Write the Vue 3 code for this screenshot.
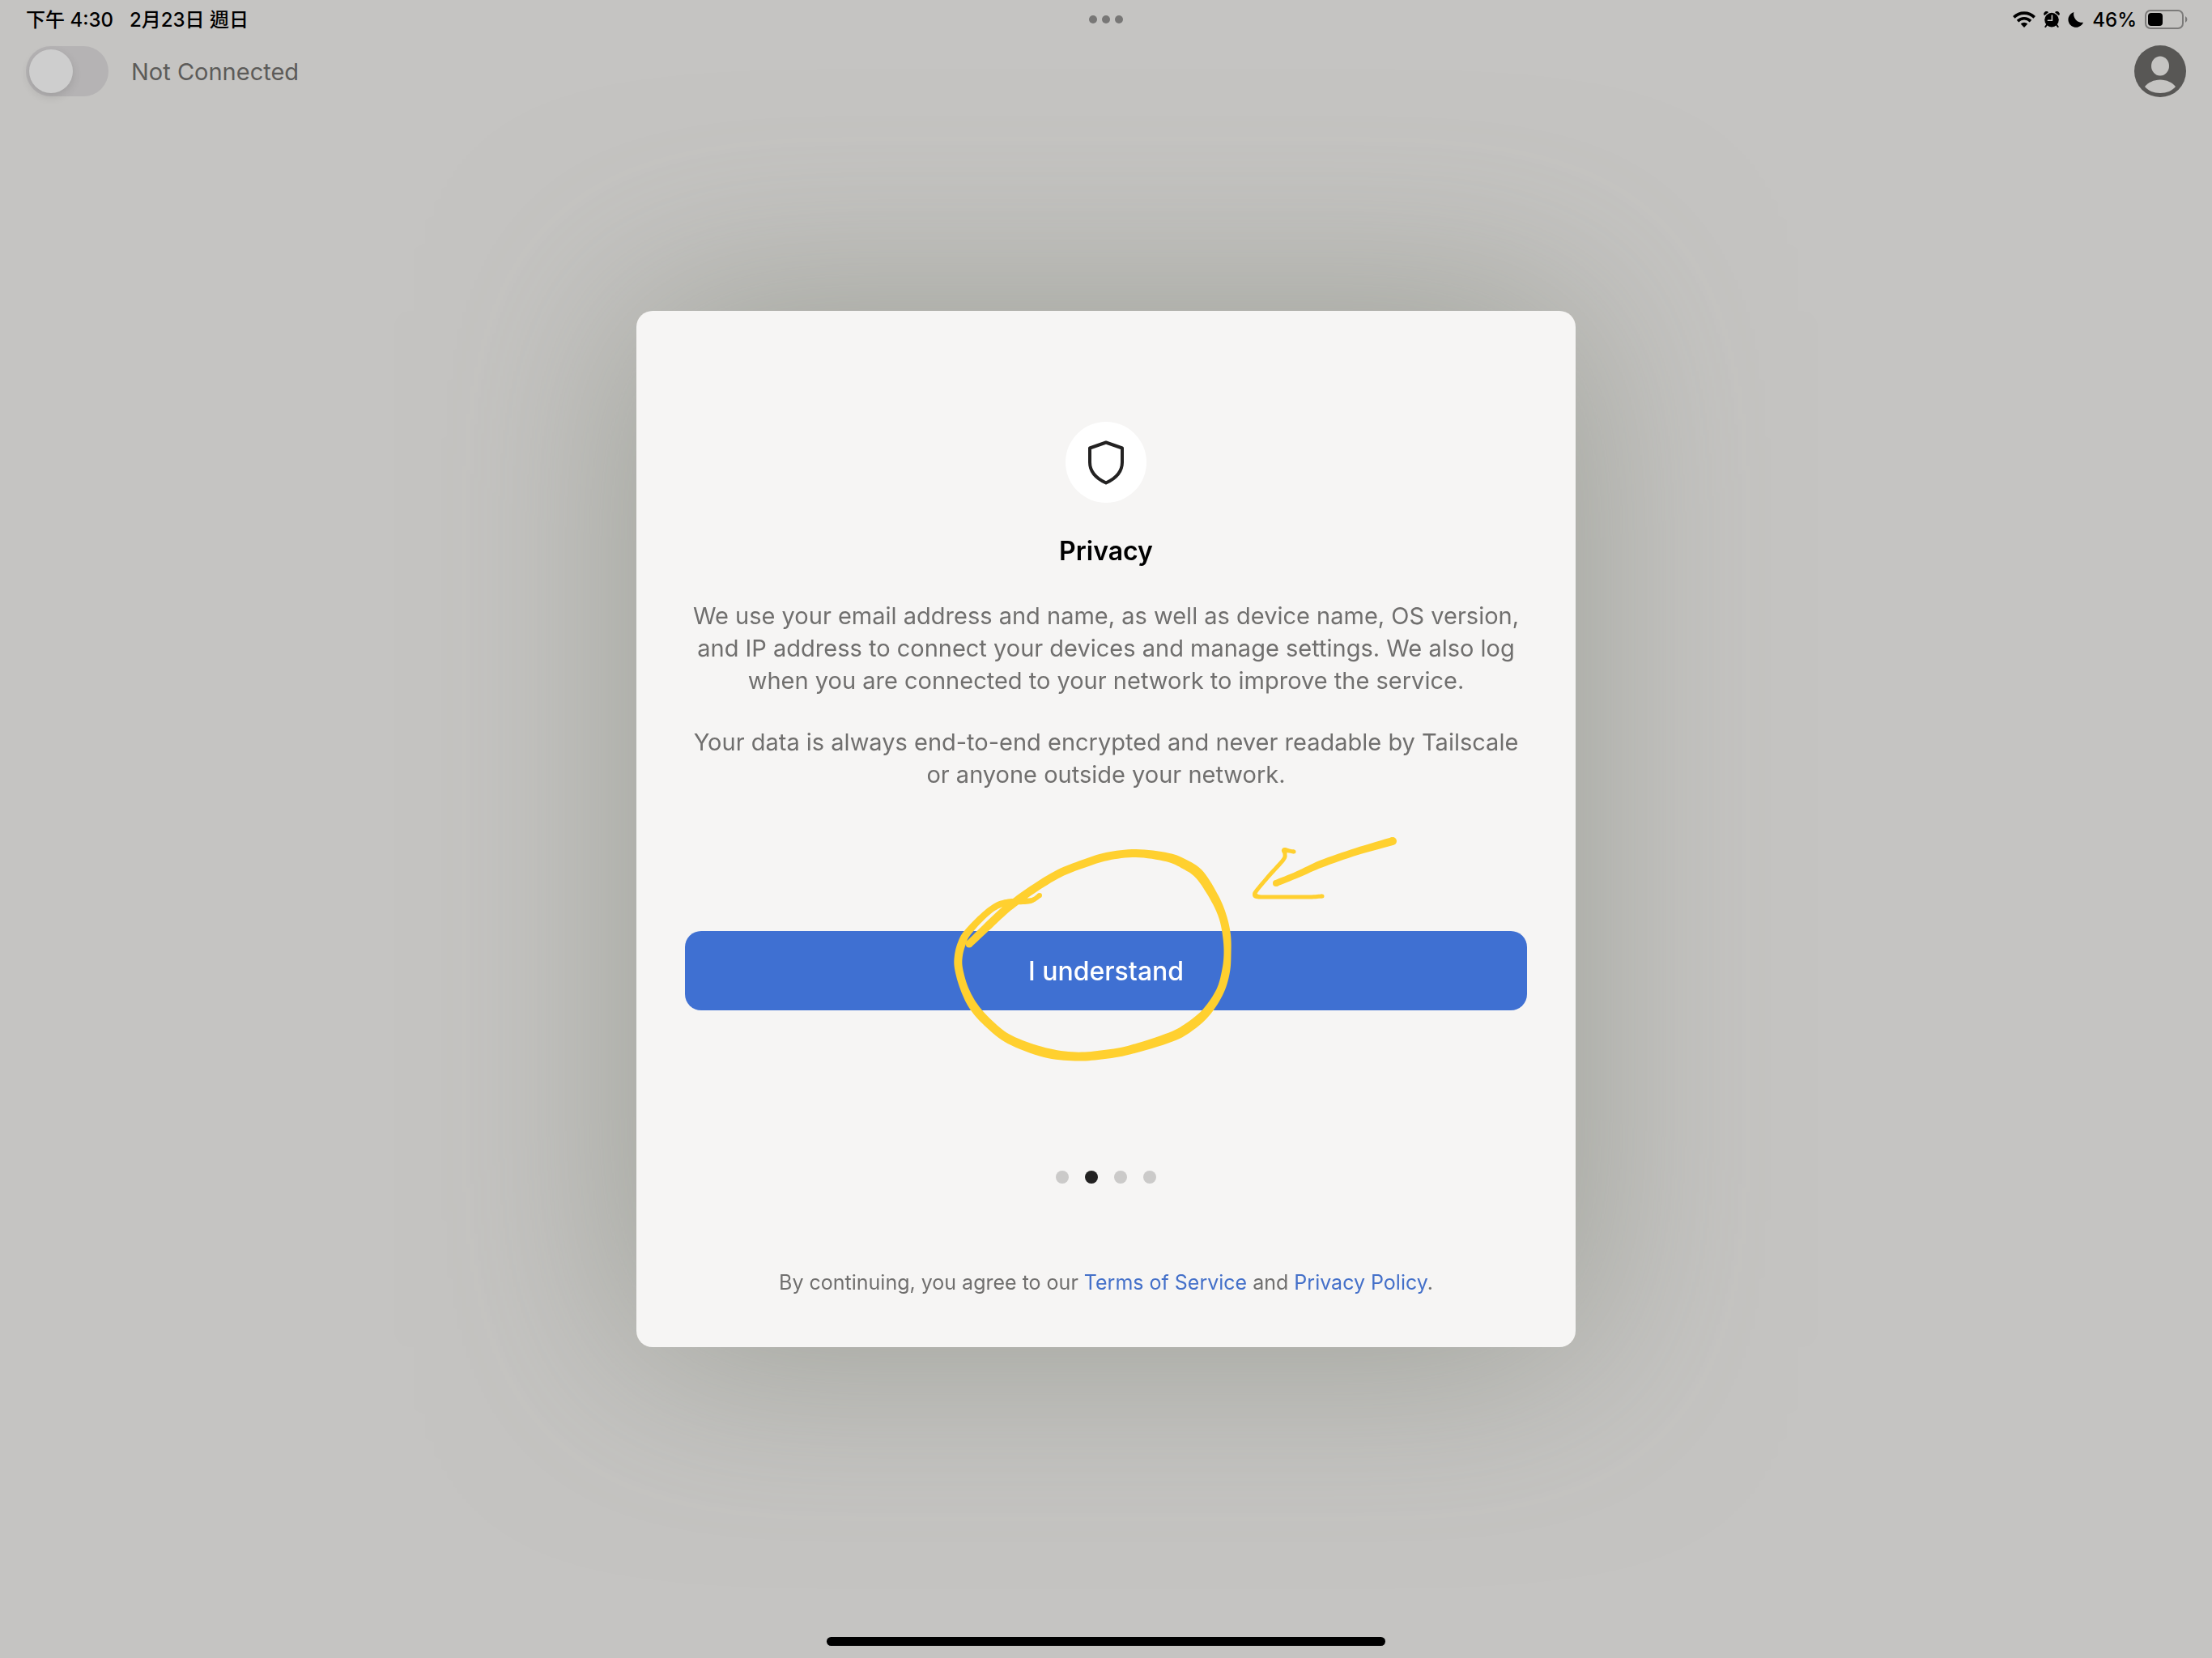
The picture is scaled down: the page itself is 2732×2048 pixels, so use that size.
<script setup>
import { ref } from 'vue'

const connected = ref(false)
const step = ref(1)
const steps = ['Welcome', 'Privacy', 'Devices', 'Sign in']

/* Pen strokes: [x, y, width] samples joined by a smooth ribbon. */
const strokes = [
  [
    [47, 146, 9], [71, 123, 10], [95, 101, 10], [125, 79, 10], [158, 59, 10], [188, 47, 10], [217, 38, 10],
    [253, 34, 10], [292, 39, 11], [314, 48, 12], [332, 61, 12], [350, 89, 11], [360, 112, 10], [365, 135, 10],
    [366, 158, 9], [364, 180, 10], [357, 204, 10], [341, 229, 11], [321, 247, 12], [296, 261, 12],
    [245, 277, 11], [210, 283, 11], [178, 285, 11], [140, 280, 12], [97, 264, 11], [72, 245, 11],
    [53, 224, 11], [41, 201, 10], [34, 176, 10], [34, 160, 10], [38, 145, 10], [45, 132, 9],
    [66, 110, 8], [83, 98, 8], [100, 94, 8], [120, 93, 7], [127, 91, 6], [134, 86, 6]
  ],
  [[426, 71, 8], [453, 60, 8], [482, 47, 9], [525, 32, 9], [570, 19, 10]],
  [
    [448, 32, 5], [442, 31, 5], [436, 30, 6], [437, 35, 5], [435, 42, 5], [418, 61, 5], [402, 80, 5], [400, 85, 6],
    [402, 87, 6], [410, 88, 5], [447, 88, 5], [468, 88, 5], [483, 87, 5]
  ]
]

function ribbon(points) {
  const samples = []
  for (let i = 0; i < points.length - 1; i++) {
    const a = points[Math.max(i - 1, 0)]
    const b = points[i]
    const c = points[i + 1]
    const d = points[Math.min(i + 2, points.length - 1)]
    for (let s = 0; s < 8; s++) {
      const t = s / 8
      samples.push([0, 1, 2].map((k) =>
        0.5 * (2 * b[k] + (c[k] - a[k]) * t + (2 * a[k] - 5 * b[k] + 4 * c[k] - d[k]) * t * t +
          (3 * b[k] - a[k] - 3 * c[k] + d[k]) * t * t * t)))
    }
  }
  samples.push(points[points.length - 1])
  const left = []
  const right = []
  samples.forEach(([x, y, w], i) => {
    const p = samples[Math.max(i - 1, 0)]
    const n = samples[Math.min(i + 1, samples.length - 1)]
    const len = Math.hypot(n[0] - p[0], n[1] - p[1]) || 1
    const ox = (-(n[1] - p[1]) / len) * w / 2
    const oy = ((n[0] - p[0]) / len) * w / 2
    left.push(`${(x + ox).toFixed(2)} ${(y + oy).toFixed(2)}`)
    right.unshift(`${(x - ox).toFixed(2)} ${(y - oy).toFixed(2)}`)
  })
  return `M${left.concat(right).join('L')}Z`
}
</script>

<template>
  <div class="screen">
    <div class="status">
      <div class="status-side status-left">
        <span>下午 4:30</span>
        <span>2月23日 週日</span>
      </div>
      <div class="multitask"><i></i><i></i><i></i></div>
      <div class="status-side status-right">
        <svg width="28" height="20" viewBox="0 0 28 20" aria-label="Wi-Fi">
          <g fill="none" stroke="#000" stroke-width="3.6">
            <path d="M1.3 7.4a18 18 0 0 1 25.4 0" />
            <path d="M6 12.1a11.4 11.4 0 0 1 16 0" />
          </g>
          <path d="M14 20l-4.3-4.4a6.2 6.2 0 0 1 8.6 0z" />
        </svg>
        <svg width="20" height="20" viewBox="0 0 20 20" aria-label="Alarm">
          <circle cx="10" cy="10.6" r="8.8" />
          <path d="M1 5.2A3.2 3.2 0 0 1 6 1.2zM19 5.2A3.2 3.2 0 0 0 14 1.2z" />
          <path d="M4.5 16l-2.2 3M15.5 16l2.2 3" stroke="#000" stroke-width="2" stroke-linecap="round" />
          <path d="M10.4 5v6.2H5.4" fill="none" stroke="#c5c4c2" stroke-width="1.6" stroke-linecap="round" />
        </svg>
        <svg width="20" height="20" viewBox="0 0 20 20" aria-label="Focus">
          <path d="M7.4 1a10.4 10.4 0 0 0 11.600 12.7A9.600 9.600 0 1 1 7.4 1z" />
        </svg>
        <span>46%</span>
        <svg class="battery" width="51" height="24" viewBox="0 0 51 24" aria-label="Battery">
          <rect x="1" y="1" width="46" height="22" rx="6" fill="none" stroke="#7b7a79" stroke-width="2" />
          <rect x="4" y="4" width="18" height="16" rx="4" />
          <path d="M50 8a4.5 4.5 0 0 1 0 8z" fill="#7b7a79" />
        </svg>
      </div>
    </div>

    <header class="bar">
      <label class="connection">
        <input v-model="connected" type="checkbox" role="switch" class="switch" />
        <span>Not Connected</span>
      </label>
      <button class="avatar" type="button" aria-label="Account">
        <svg viewBox="0 0 64 64" width="64" height="64">
          <circle cx="32" cy="32" r="32" fill="#585755" />
          <ellipse cx="32" cy="25.5" rx="11" ry="12" fill="#c5c4c2" />
          <path d="M13 51c4-5 11-8.500 19-8.500s15 3.500 19 8.500c-4 5-11 8-19 8s-15-3-19-8z" fill="#c5c4c2" />
        </svg>
      </button>
    </header>

    <div class="overlay">
      <section class="card" role="dialog" aria-labelledby="title">
        <div class="badge">
          <svg width="100" height="100" viewBox="0 0 100 100" fill="none" stroke="#232222" stroke-width="4">
            <path d="M50 25.500L70 32.500V50C70 62 62 70 50 75.500C38 70 30 62 30 50V32.500Z" stroke-linejoin="round" />
          </svg>
        </div>
        <h1 id="title">Privacy</h1>
        <p>
          We use your email address and name, as well as device name, OS version,<br />
          and IP address to connect your devices and manage settings. We also log<br />
          when you are connected to your network to improve the service.
        </p>
        <p>
          Your data is always end-to-end encrypted and never readable by Tailscale<br />
          or anyone outside your network.
        </p>
        <div class="action">
          <button class="primary" type="button" @click="step = Math.min(step + 1, 3)">I understand</button>
          <svg class="ink" width="620" height="310" viewBox="0 0 620 310" aria-hidden="true">
            <g v-for="(s, i) in strokes" :key="i" fill="#ffd02f">
              <path :d="ribbon(s)" />
              <circle :cx="s[0][0]" :cy="s[0][1]" :r="s[0][2] / 2" />
              <circle :cx="s[s.length - 1][0]" :cy="s[s.length - 1][1]" :r="s[s.length - 1][2] / 2" />
            </g>
          </svg>
        </div>
        <div class="dots">
          <i v-for="(s, i) in steps" :key="s" :class="{ on: i === step }"></i>
        </div>
        <footer>
          By continuing, you agree to our <a href="#terms">Terms of Service</a> and
          <a href="#privacy">Privacy Policy</a>.
        </footer>
      </section>
    </div>

    <div class="home"></div>
  </div>
</template>

<style>
body {
  background: #c5c4c2;
}
</style>

<style scoped>
.screen {
  box-sizing: border-box;
  min-height: 100vh;
  display: flex;
  flex-direction: column;
  background: #c5c4c2;
  color: #000;
  font-family: Inter, "Noto Sans CJK TC", sans-serif;
}
.status {
  display: grid;
  grid-template-columns: 1fr auto 1fr;
  align-items: center;
  height: 48px;
  padding: 0 32px;
  font-size: 24px;
  font-weight: 500;
}
.status-side {
  display: flex;
  align-items: center;
}
.status-left {
  gap: 20px;
  padding-bottom: 3px;
}
.status-right {
  justify-content: flex-end;
  gap: 10px;
}
.battery {
  overflow: visible;
}
.multitask {
  display: flex;
  gap: 6px;
}
.multitask i {
  width: 10px;
  height: 10px;
  border-radius: 50%;
  background: #787776;
}
.bar {
  display: flex;
  align-items: center;
  justify-content: space-between;
  height: 80px;
  padding: 0 32px;
}
.connection {
  display: flex;
  align-items: center;
  gap: 28px;
  color: #5c5b59;
  font-size: 29px;
}
.switch {
  appearance: none;
  display: flex;
  width: 102px;
  height: 62px;
  margin: 0;
  padding: 4px;
  box-sizing: border-box;
  border-radius: 31px;
  background: #b5b3b4;
}
.switch::before {
  content: "";
  width: 54px;
  height: 54px;
  border-radius: 50%;
  background: #cecece;
  box-shadow: 0 4px 12px rgba(0, 0, 0, 0.12);
}
.switch:checked {
  justify-content: flex-end;
}
.avatar {
  display: flex;
  padding: 0;
  border: 0;
  background: none;
}
.overlay {
  position: fixed;
  inset: 0;
  display: flex;
  align-items: center;
  justify-content: center;
}
.card {
  box-sizing: border-box;
  width: min(1160px, 92vw);
  padding: 137px 60px 60px;
  border-radius: 20px;
  background: #f6f5f4;
  box-shadow: 0 0 250px rgba(130, 135, 122, 0.6);
  color: #706f6e;
  text-align: center;
}
.badge {
  display: flex;
  width: 100px;
  height: 100px;
  margin: 0 auto;
  border-radius: 50%;
  background: #fff;
}
h1 {
  margin: 40px 0;
  color: #000;
  font-size: 32px;
  font-weight: 600;
  line-height: 40px;
}
p {
  margin: 0 0 36px;
  font-size: 29px;
  line-height: 40px;
}
.action {
  position: relative;
  margin-top: 173px;
}
.primary {
  display: block;
  width: 100%;
  height: 98px;
  border: 0;
  border-radius: 20px;
  background: #3f70d2;
  color: #fff;
  font: 500 32px Inter, sans-serif;
}
.ink {
  position: absolute;
  left: 304px;
  top: -130px;
  pointer-events: none;
}
.dots {
  display: flex;
  justify-content: center;
  gap: 20px;
  margin-top: 198px;
}
.dots i {
  width: 16px;
  height: 16px;
  border-radius: 50%;
  background: #cbcac9;
}
.dots .on {
  background: #232222;
}
footer {
  margin-top: 102px;
  font-size: 25px;
  line-height: 40px;
}
a {
  color: #4470c9;
  text-decoration: none;
}
.home {
  width: min(690px, 60vw);
  height: 11px;
  margin: auto auto 15px;
  border-radius: 6px;
  background: #000;
}
</style>
